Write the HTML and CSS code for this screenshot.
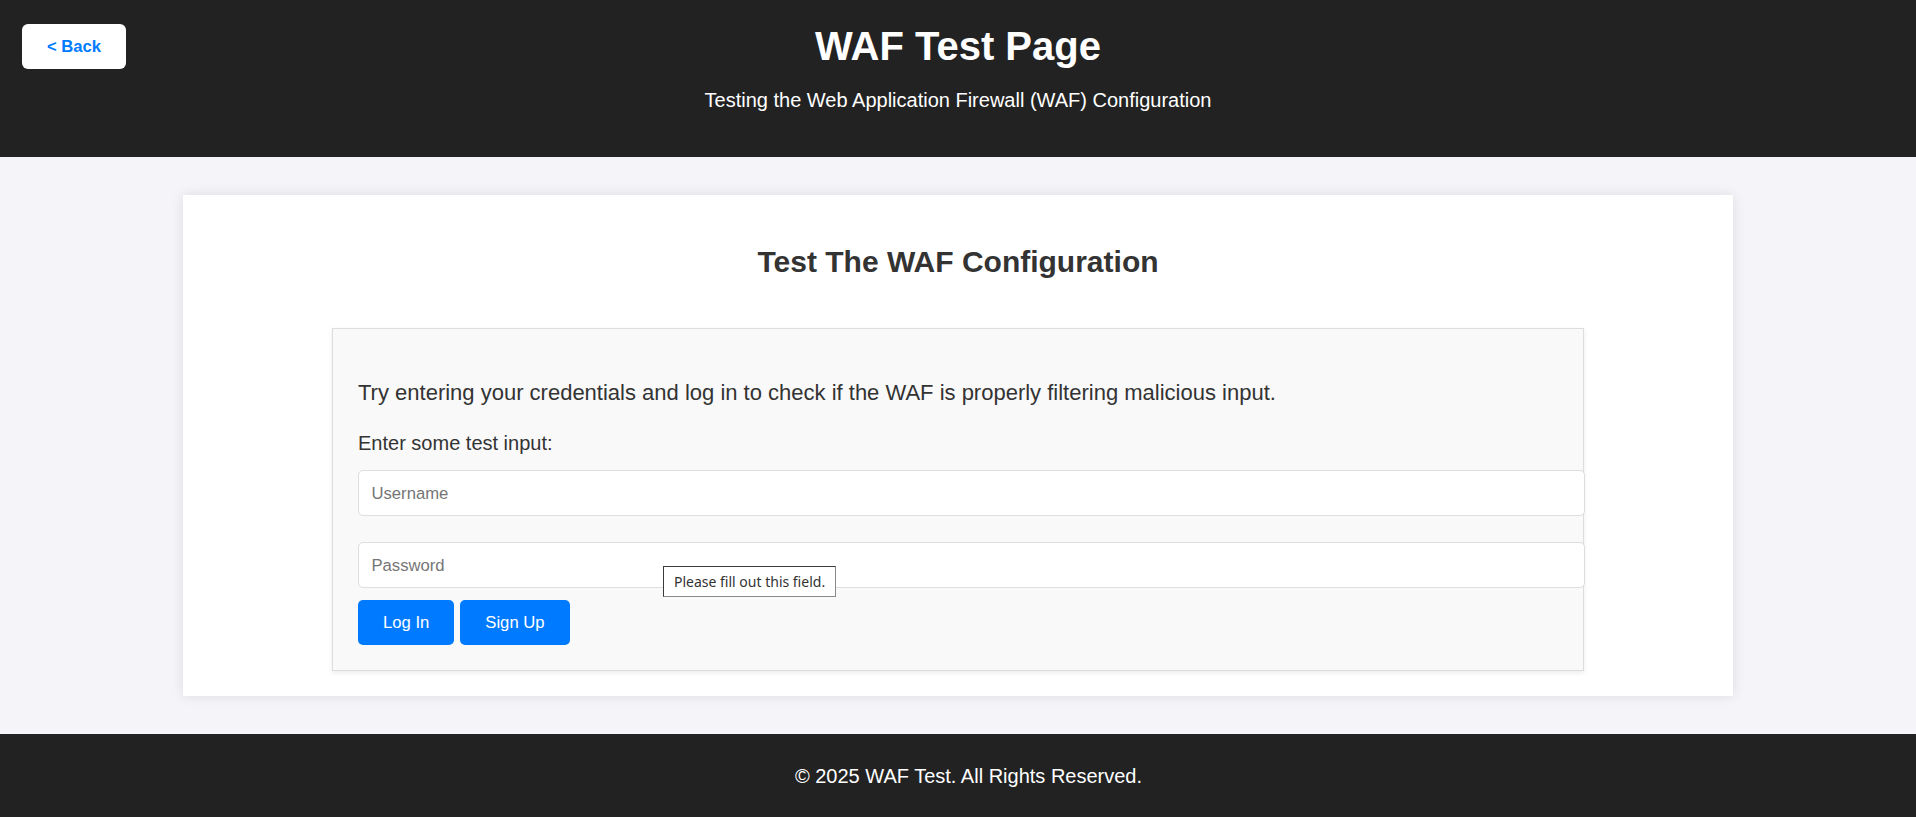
FILE: index.html
```html
<!DOCTYPE html>
<html lang="en">
<head>
<meta charset="utf-8">
<title>WAF Test Page</title>
<link rel="stylesheet" href="styles.css">
</head>
<body>
<header class="site-header">
  <button class="back-btn" type="button">&lt; Back</button>
  <h1 class="site-title">WAF Test Page</h1>
  <p class="site-subtitle">Testing the Web Application Firewall (WAF) Configuration</p>
</header>
<main class="main">
  <section class="card">
    <h2 class="card-title">Test The WAF Configuration</h2>
    <div class="test-box">
      <p class="intro">Try entering your credentials and log in to check if the WAF is properly filtering malicious input.</p>
      <label class="field-label" for="username">Enter some test input:</label>
      <input class="field field-user" id="username" type="text" placeholder="Username">
      <div class="field-wrap">
        <input class="field" id="password" type="password" placeholder="Password">
        <div class="tooltip">Please fill out this field.</div>
      </div>
      <div class="actions">
        <button class="btn" type="button">Log In</button>
        <button class="btn" type="button">Sign Up</button>
      </div>
    </div>
  </section>
</main>
<footer class="site-footer">
  <p class="footer-text">© 2025 WAF Test. All Rights Reserved.</p>
</footer>
</body>
</html>
```
FILE: styles.css
```css
html, body {
  margin: 0;
  padding: 0;
}
body {
  font-family: "Liberation Sans", Arial, sans-serif;
  background: #f4f4f9;
  color: #333;
}
.site-header {
  position: relative;
  background: #222;
  color: #fff;
  text-align: center;
  padding: 23px 0 45px;
}
.back-btn {
  position: absolute;
  left: 22px;
  top: 24px;
  width: 104px;
  height: 45px;
  padding: 0;
  border: none;
  border-radius: 6px;
  background: #fff;
  color: #007bff;
  font-family: "Liberation Sans", Arial, sans-serif;
  font-weight: bold;
  font-size: 16.67px;
  line-height: 20px;
}
.site-title {
  margin: 0;
  font-size: 40px;
  line-height: 46px;
  font-weight: bold;
}
.site-subtitle {
  margin: 20px 0 0;
  font-size: 20px;
  line-height: 23px;
}
.main {
  padding: 38px 0;
}
.card {
  max-width: 1500px;
  margin: 0 auto;
  padding: 25px;
  background: #fff;
  box-shadow: 0 0 12px rgba(0, 0, 0, 0.1);
}
.card-title {
  margin: 24px 0 49px;
  text-align: center;
  font-size: 30px;
  line-height: 35px;
  font-weight: bold;
  color: #333;
}
.test-box {
  width: 1200px;
  margin: 0 auto;
  padding: 0 25px 25px;
  border: 1px solid #ddd;
  background: #f9f9f9;
  box-shadow: 0 2px 5px rgba(0, 0, 0, 0.08);
}
.intro {
  margin: 0;
  padding-top: 51px;
  font-size: 22px;
  line-height: 25px;
}
.field-label {
  display: block;
  margin-top: 27px;
  font-size: 20px;
  line-height: 23px;
}
.field {
  display: block;
  box-sizing: content-box;
  width: 100%;
  height: 19px;
  margin: 0;
  padding: 12.5px 12.5px;
  border: 1px solid #ddd;
  border-radius: 5px;
  background: #fff;
  font-family: "Liberation Sans", Arial, sans-serif;
  font-size: 16.67px;
  line-height: 19px;
  color: #333;
  outline: none;
}
.field::placeholder {
  color: #757575;
}
.field-user {
  margin-top: 15px;
}
.field-wrap {
  position: relative;
  margin-top: 26px;
}
.tooltip {
  position: absolute;
  left: 305px;
  top: 24px;
  height: 29px;
  padding: 0 10px;
  border: 1px solid;
  border-color: #3a3a3a #8a8a8a #8a8a8a #3a3a3a;
  background: #fff;
  color: #333;
  font-family: "Noto Sans", "Open Sans", sans-serif;
  font-size: 14px;
  line-height: 29px;
  white-space: nowrap;
}
.actions {
  display: flex;
  gap: 6px;
  margin-top: 12px;
}
.btn {
  height: 45px;
  padding: 0 25px;
  border: none;
  border-radius: 5px;
  background: #007bff;
  color: #fff;
  font-family: "Liberation Sans", Arial, sans-serif;
  font-size: 16.67px;
  line-height: 20px;
}
.site-footer {
  background: #222;
  color: #fff;
  text-align: center;
  padding: 31px 0 29px 21px;
}
.footer-text {
  margin: 0;
  font-size: 20px;
  line-height: 23px;
}
```
